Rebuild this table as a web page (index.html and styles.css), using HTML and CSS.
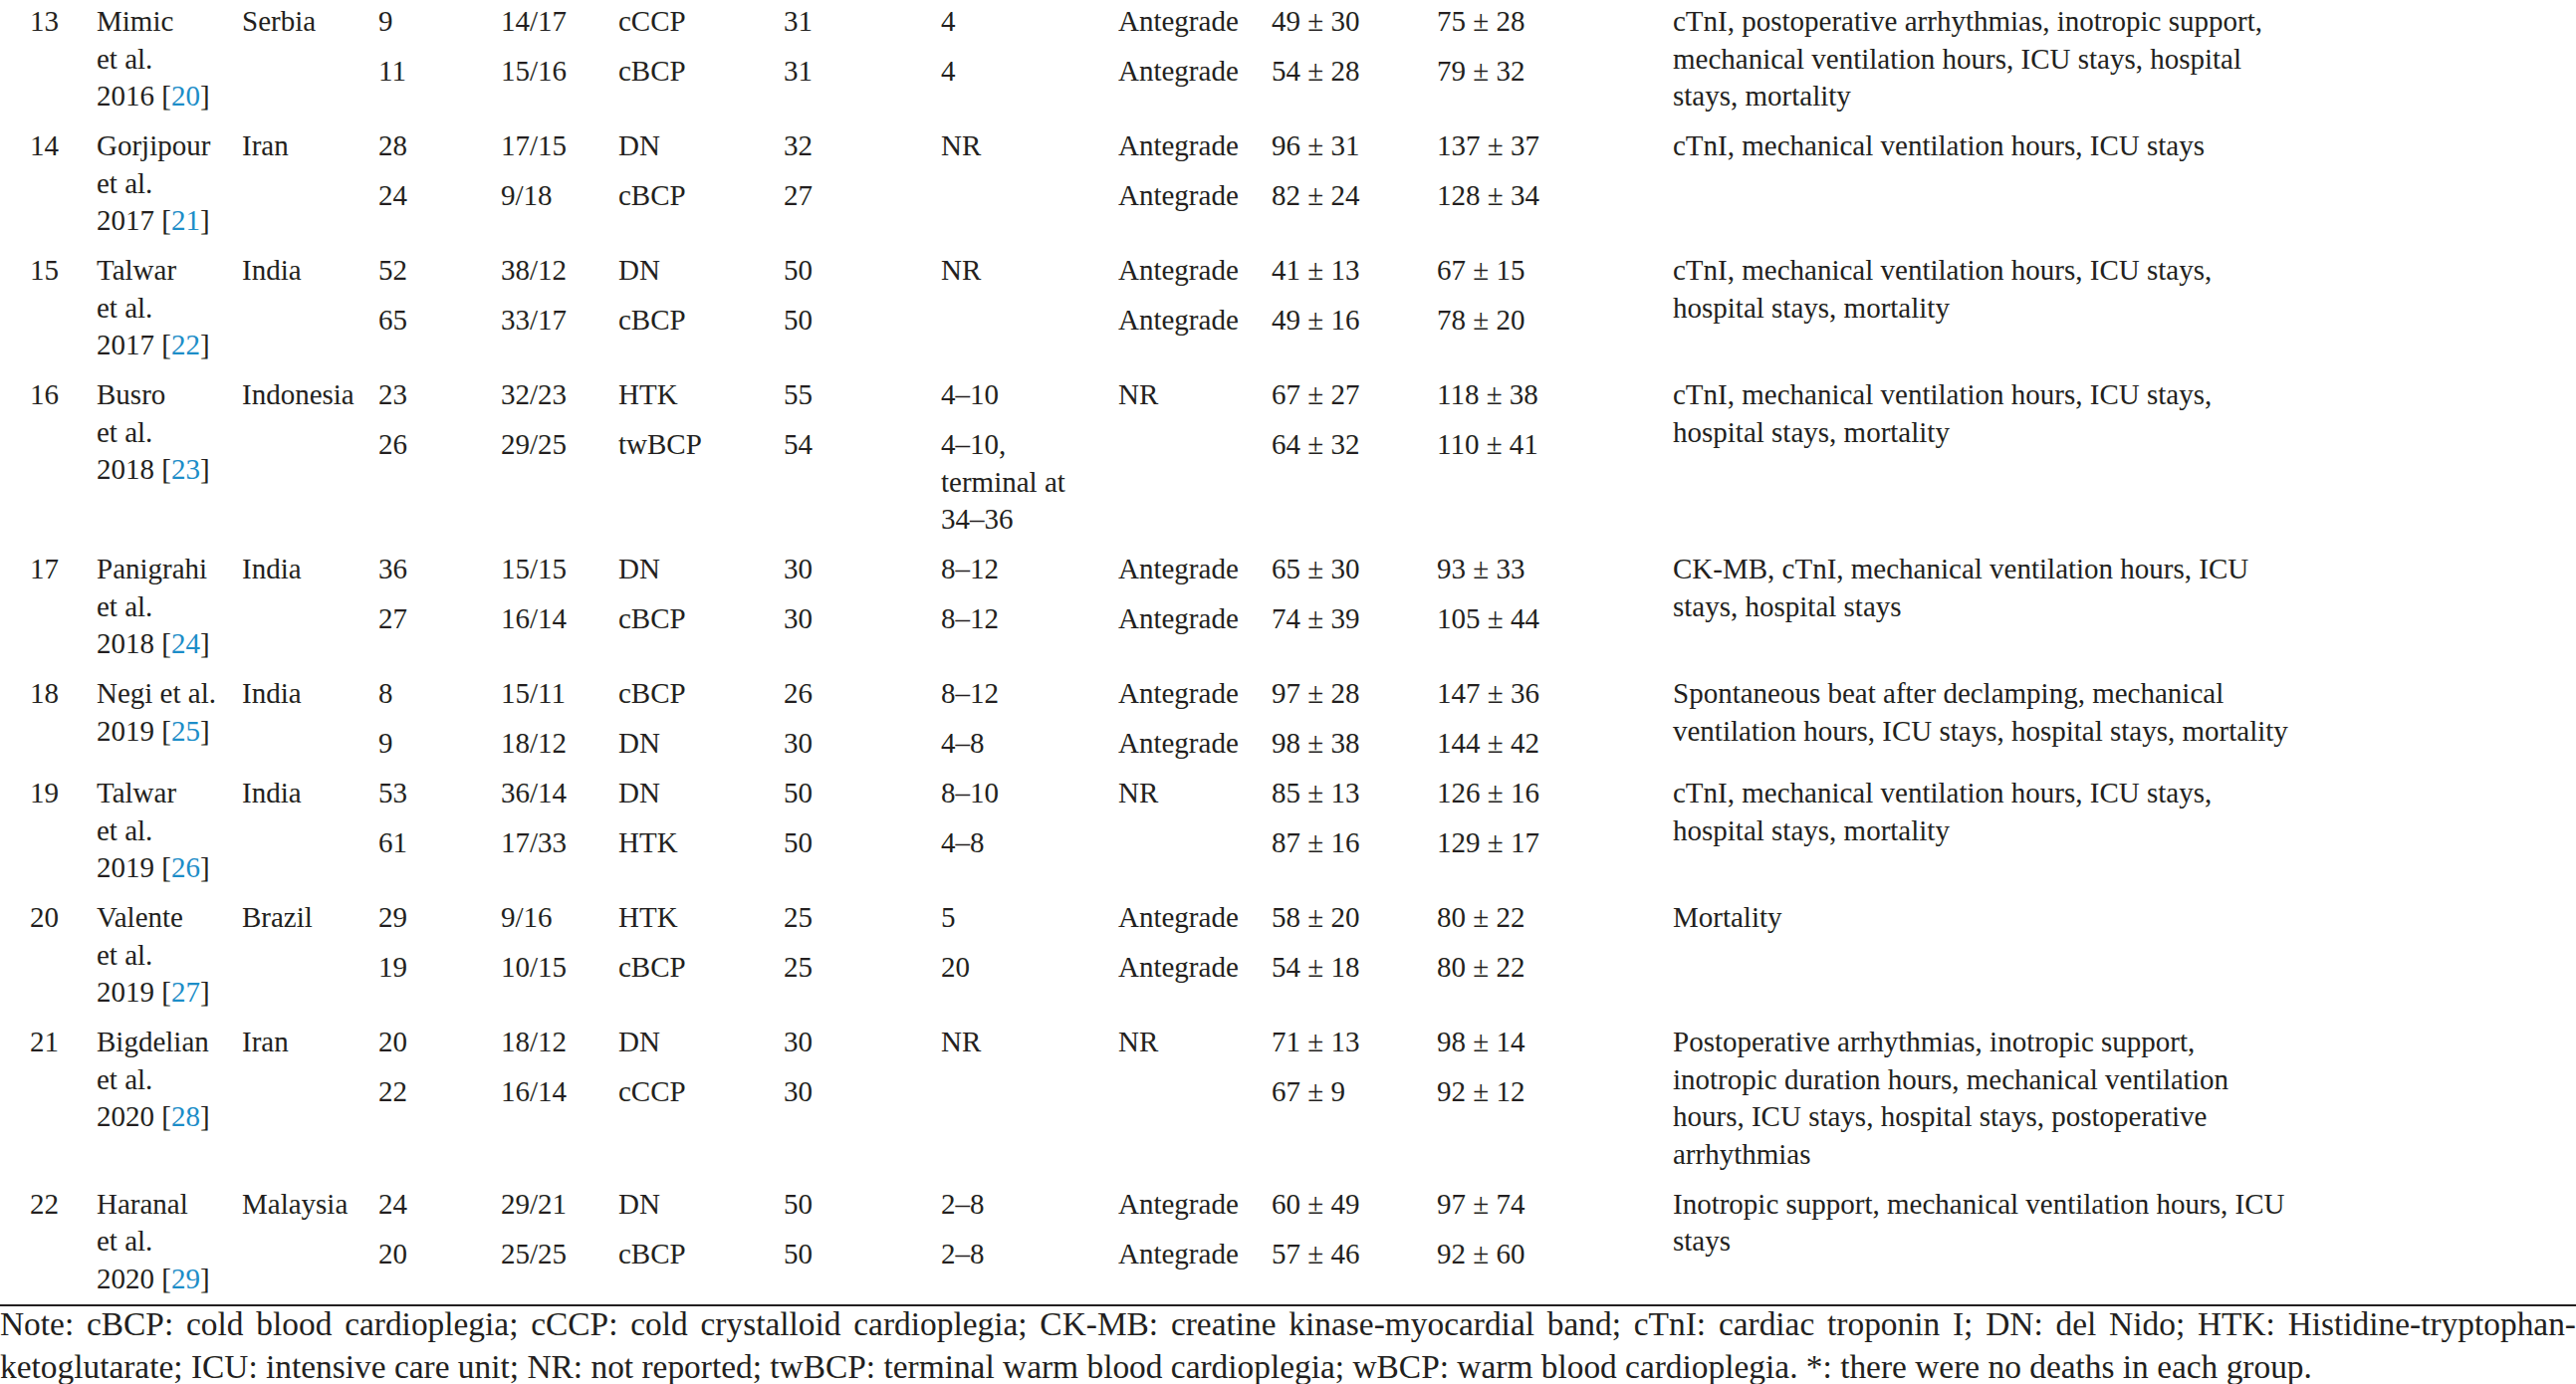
FILE: index.html
```html
<!DOCTYPE html>
<html lang="en">
<head>
<meta charset="utf-8">
<title>Table continuation</title>
<link rel="stylesheet" href="styles.css">
</head>
<body>
<table class="tbl">
  <colgroup>
    <col class="w-no"><col class="w-study"><col class="w-country"><col class="w-n"><col class="w-mf"><col class="w-type"><col class="w-temp"><col class="w-int"><col class="w-route"><col class="w-t1"><col class="w-t2"><col class="w-out">
  </colgroup>
  <tbody>
    <tr>
      <td class="one no">13</td>
      <td class="one study">Mimic et&nbsp;al. <span class="yr">2016 [<a class="ref" href="#">20</a>]</span></td>
      <td class="one">Serbia</td>
      <td class="grp"><div class="sub">9</div><div class="sub">11</div></td>
      <td class="grp"><div class="sub">14/17</div><div class="sub">15/16</div></td>
      <td class="grp"><div class="sub">cCCP</div><div class="sub">cBCP</div></td>
      <td class="grp"><div class="sub">31</div><div class="sub">31</div></td>
      <td class="grp"><div class="sub">4</div><div class="sub">4</div></td>
      <td class="grp"><div class="sub">Antegrade</div><div class="sub">Antegrade</div></td>
      <td class="grp"><div class="sub">49 ± 30</div><div class="sub">54 ± 28</div></td>
      <td class="grp"><div class="sub">75 ± 28</div><div class="sub">79 ± 32</div></td>
      <td class="one"><div class="out">cTnI, postoperative arrhythmias, inotropic support, mechanical ventilation hours, ICU stays, hospital stays, mortality</div></td>
    </tr>
    <tr>
      <td class="one no">14</td>
      <td class="one study">Gorjipour et&nbsp;al. <span class="yr">2017 [<a class="ref" href="#">21</a>]</span></td>
      <td class="one">Iran</td>
      <td class="grp"><div class="sub">28</div><div class="sub">24</div></td>
      <td class="grp"><div class="sub">17/15</div><div class="sub">9/18</div></td>
      <td class="grp"><div class="sub">DN</div><div class="sub">cBCP</div></td>
      <td class="grp"><div class="sub">32</div><div class="sub">27</div></td>
      <td class="grp"><div class="sub">NR</div><div class="sub"></div></td>
      <td class="grp"><div class="sub">Antegrade</div><div class="sub">Antegrade</div></td>
      <td class="grp"><div class="sub">96 ± 31</div><div class="sub">82 ± 24</div></td>
      <td class="grp"><div class="sub">137 ± 37</div><div class="sub">128 ± 34</div></td>
      <td class="one"><div class="out">cTnI, mechanical ventilation hours, ICU stays</div></td>
    </tr>
    <tr>
      <td class="one no">15</td>
      <td class="one study">Talwar et&nbsp;al. <span class="yr">2017 [<a class="ref" href="#">22</a>]</span></td>
      <td class="one">India</td>
      <td class="grp"><div class="sub">52</div><div class="sub">65</div></td>
      <td class="grp"><div class="sub">38/12</div><div class="sub">33/17</div></td>
      <td class="grp"><div class="sub">DN</div><div class="sub">cBCP</div></td>
      <td class="grp"><div class="sub">50</div><div class="sub">50</div></td>
      <td class="grp"><div class="sub">NR</div><div class="sub"></div></td>
      <td class="grp"><div class="sub">Antegrade</div><div class="sub">Antegrade</div></td>
      <td class="grp"><div class="sub">41 ± 13</div><div class="sub">49 ± 16</div></td>
      <td class="grp"><div class="sub">67 ± 15</div><div class="sub">78 ± 20</div></td>
      <td class="one"><div class="out">cTnI, mechanical ventilation hours, ICU stays, hospital stays, mortality</div></td>
    </tr>
    <tr>
      <td class="one no">16</td>
      <td class="one study">Busro et&nbsp;al. <span class="yr">2018 [<a class="ref" href="#">23</a>]</span></td>
      <td class="one">Indonesia</td>
      <td class="grp"><div class="sub">23</div><div class="sub">26</div></td>
      <td class="grp"><div class="sub">32/23</div><div class="sub">29/25</div></td>
      <td class="grp"><div class="sub">HTK</div><div class="sub">twBCP</div></td>
      <td class="grp"><div class="sub">55</div><div class="sub">54</div></td>
      <td class="grp"><div class="sub">4–10</div><div class="sub">4–10, terminal at 34–36</div></td>
      <td class="grp"><div class="sub">NR</div><div class="sub"></div></td>
      <td class="grp"><div class="sub">67 ± 27</div><div class="sub">64 ± 32</div></td>
      <td class="grp"><div class="sub">118 ± 38</div><div class="sub">110 ± 41</div></td>
      <td class="one"><div class="out">cTnI, mechanical ventilation hours, ICU stays, hospital stays, mortality</div></td>
    </tr>
    <tr>
      <td class="one no">17</td>
      <td class="one study">Panigrahi et&nbsp;al. <span class="yr">2018 [<a class="ref" href="#">24</a>]</span></td>
      <td class="one">India</td>
      <td class="grp"><div class="sub">36</div><div class="sub">27</div></td>
      <td class="grp"><div class="sub">15/15</div><div class="sub">16/14</div></td>
      <td class="grp"><div class="sub">DN</div><div class="sub">cBCP</div></td>
      <td class="grp"><div class="sub">30</div><div class="sub">30</div></td>
      <td class="grp"><div class="sub">8–12</div><div class="sub">8–12</div></td>
      <td class="grp"><div class="sub">Antegrade</div><div class="sub">Antegrade</div></td>
      <td class="grp"><div class="sub">65 ± 30</div><div class="sub">74 ± 39</div></td>
      <td class="grp"><div class="sub">93 ± 33</div><div class="sub">105 ± 44</div></td>
      <td class="one"><div class="out">CK-MB, cTnI, mechanical ventilation hours, ICU stays, hospital stays</div></td>
    </tr>
    <tr>
      <td class="one no">18</td>
      <td class="one study">Negi et&nbsp;al. <span class="yr">2019 [<a class="ref" href="#">25</a>]</span></td>
      <td class="one">India</td>
      <td class="grp"><div class="sub">8</div><div class="sub">9</div></td>
      <td class="grp"><div class="sub">15/11</div><div class="sub">18/12</div></td>
      <td class="grp"><div class="sub">cBCP</div><div class="sub">DN</div></td>
      <td class="grp"><div class="sub">26</div><div class="sub">30</div></td>
      <td class="grp"><div class="sub">8–12</div><div class="sub">4–8</div></td>
      <td class="grp"><div class="sub">Antegrade</div><div class="sub">Antegrade</div></td>
      <td class="grp"><div class="sub">97 ± 28</div><div class="sub">98 ± 38</div></td>
      <td class="grp"><div class="sub">147 ± 36</div><div class="sub">144 ± 42</div></td>
      <td class="one"><div class="out">Spontaneous beat after declamping, mechanical ventilation hours, ICU stays, hospital stays, mortality</div></td>
    </tr>
    <tr>
      <td class="one no">19</td>
      <td class="one study">Talwar et&nbsp;al. <span class="yr">2019 [<a class="ref" href="#">26</a>]</span></td>
      <td class="one">India</td>
      <td class="grp"><div class="sub">53</div><div class="sub">61</div></td>
      <td class="grp"><div class="sub">36/14</div><div class="sub">17/33</div></td>
      <td class="grp"><div class="sub">DN</div><div class="sub">HTK</div></td>
      <td class="grp"><div class="sub">50</div><div class="sub">50</div></td>
      <td class="grp"><div class="sub">8–10</div><div class="sub">4–8</div></td>
      <td class="grp"><div class="sub">NR</div><div class="sub"></div></td>
      <td class="grp"><div class="sub">85 ± 13</div><div class="sub">87 ± 16</div></td>
      <td class="grp"><div class="sub">126 ± 16</div><div class="sub">129 ± 17</div></td>
      <td class="one"><div class="out">cTnI, mechanical ventilation hours, ICU stays, hospital stays, mortality</div></td>
    </tr>
    <tr>
      <td class="one no">20</td>
      <td class="one study">Valente et&nbsp;al. <span class="yr">2019 [<a class="ref" href="#">27</a>]</span></td>
      <td class="one">Brazil</td>
      <td class="grp"><div class="sub">29</div><div class="sub">19</div></td>
      <td class="grp"><div class="sub">9/16</div><div class="sub">10/15</div></td>
      <td class="grp"><div class="sub">HTK</div><div class="sub">cBCP</div></td>
      <td class="grp"><div class="sub">25</div><div class="sub">25</div></td>
      <td class="grp"><div class="sub">5</div><div class="sub">20</div></td>
      <td class="grp"><div class="sub">Antegrade</div><div class="sub">Antegrade</div></td>
      <td class="grp"><div class="sub">58 ± 20</div><div class="sub">54 ± 18</div></td>
      <td class="grp"><div class="sub">80 ± 22</div><div class="sub">80 ± 22</div></td>
      <td class="one"><div class="out">Mortality</div></td>
    </tr>
    <tr>
      <td class="one no">21</td>
      <td class="one study">Bigdelian et&nbsp;al. <span class="yr">2020 [<a class="ref" href="#">28</a>]</span></td>
      <td class="one">Iran</td>
      <td class="grp"><div class="sub">20</div><div class="sub">22</div></td>
      <td class="grp"><div class="sub">18/12</div><div class="sub">16/14</div></td>
      <td class="grp"><div class="sub">DN</div><div class="sub">cCCP</div></td>
      <td class="grp"><div class="sub">30</div><div class="sub">30</div></td>
      <td class="grp"><div class="sub">NR</div><div class="sub"></div></td>
      <td class="grp"><div class="sub">NR</div><div class="sub"></div></td>
      <td class="grp"><div class="sub">71 ± 13</div><div class="sub">67 ± 9</div></td>
      <td class="grp"><div class="sub">98 ± 14</div><div class="sub">92 ± 12</div></td>
      <td class="one"><div class="out">Postoperative arrhythmias, inotropic support, inotropic duration hours, mechanical ventilation hours, ICU stays, hospital stays, postoperative arrhythmias</div></td>
    </tr>
    <tr>
      <td class="one no">22</td>
      <td class="one study">Haranal et&nbsp;al. <span class="yr">2020 [<a class="ref" href="#">29</a>]</span></td>
      <td class="one">Malaysia</td>
      <td class="grp"><div class="sub">24</div><div class="sub">20</div></td>
      <td class="grp"><div class="sub">29/21</div><div class="sub">25/25</div></td>
      <td class="grp"><div class="sub">DN</div><div class="sub">cBCP</div></td>
      <td class="grp"><div class="sub">50</div><div class="sub">50</div></td>
      <td class="grp"><div class="sub">2–8</div><div class="sub">2–8</div></td>
      <td class="grp"><div class="sub">Antegrade</div><div class="sub">Antegrade</div></td>
      <td class="grp"><div class="sub">60 ± 49</div><div class="sub">57 ± 46</div></td>
      <td class="grp"><div class="sub">97 ± 74</div><div class="sub">92 ± 60</div></td>
      <td class="one"><div class="out">Inotropic support, mechanical ventilation hours, ICU stays</div></td>
    </tr>
  </tbody>
</table>
<div class="rule"></div>
<p class="note">Note: cBCP: cold blood cardioplegia; cCCP: cold crystalloid cardioplegia; CK-MB: creatine kinase-myocardial band; cTnI: cardiac troponin I; DN: del Nido; HTK: Histidine-tryptophan-ketoglutarate; ICU: intensive care unit; NR: not reported; twBCP: terminal warm blood cardioplegia; wBCP: warm blood cardioplegia. *: there were no deaths in each group.</p>
</body>
</html>
```

FILE: styles.css
```css
html, body {
  margin: 0;
  padding: 0;
  background: #ffffff;
}

body {
  font-family: "Liberation Serif", "Times New Roman", serif;
  color: #231f20;
  width: 2587px;
  overflow: hidden;
}

.tbl {
  width: 2587px;
  table-layout: fixed;
  border-collapse: collapse;
  margin-top: -3px;
  font-size: 29px;
  line-height: 37.5px;
}

.w-no { width: 97px; }
.w-study { width: 146px; }
.w-country { width: 137px; }
.w-n { width: 123px; }
.w-mf { width: 118px; }
.w-type { width: 166px; }
.w-temp { width: 158px; }
.w-int { width: 178px; }
.w-route { width: 154px; }
.w-t1 { width: 166px; }
.w-t2 { width: 237px; }
.w-out { width: auto; }

.tbl td {
  padding: 0;
  vertical-align: top;
  text-align: left;
}

.tbl td.one {
  padding: 6px 20px 6.5px 0;
}

.tbl td.no {
  padding-left: 30px;
}

.tbl td.grp {
  padding: 0;
}

.yr {
  display: block;
  white-space: nowrap;
}

.sub {
  padding: 6px 16px 6.5px 0;
  min-height: 37.5px;
}

.out {
  width: 628px;
}

.ref {
  color: #1c8dc8;
  text-decoration: none;
}

.rule {
  height: 2px;
  background: #231f20;
}

.note {
  margin: -4px 0 0 0;
  font-size: 33.4px;
  line-height: 43px;
  text-align: justify;
}
```
